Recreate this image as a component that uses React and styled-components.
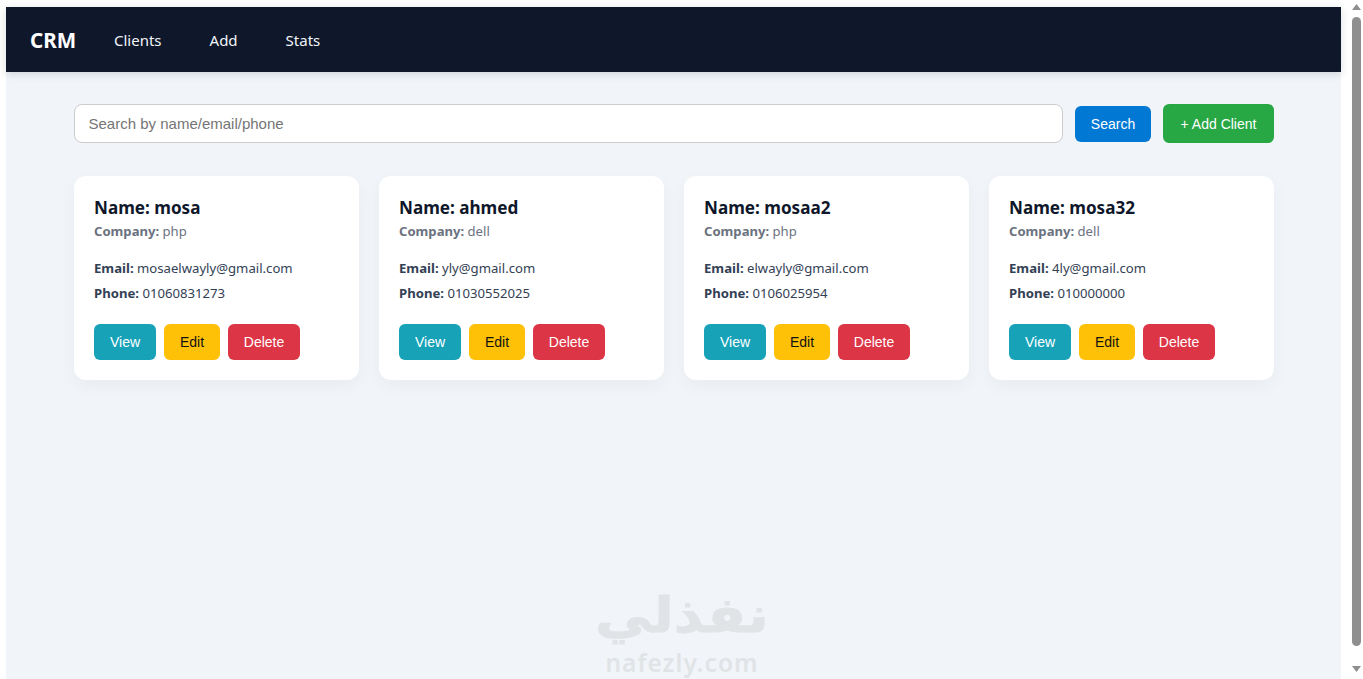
import React from "react";
import styled, { createGlobalStyle } from "styled-components";

const clients = [
  { name: "mosa", company: "php", email: "mosaelwayly@gmail.com", phone: "01060831273" },
  { name: "ahmed", company: "dell", email: "yly@gmail.com", phone: "01030552025" },
  { name: "mosaa2", company: "php", email: "elwayly@gmail.com", phone: "0106025954" },
  { name: "mosa32", company: "dell", email: "4ly@gmail.com", phone: "010000000" },
];

const GlobalStyle = createGlobalStyle`
  html, body {
    margin: 0;
    height: 100%;
    overflow: hidden;
    background: #fff;
  }
  * { box-sizing: border-box; }
`;

const Frame = styled.div`
  display: flex;
  height: 679px;
  padding: 7px 1px 0 6px;
  font-family: "Noto Sans", "Open Sans", sans-serif;
`;

const Page = styled.div`
  position: relative;
  width: 1335px;
  background: #f1f5f9;
`;

const Nav = styled.nav`
  display: flex;
  align-items: center;
  height: 65px;
  padding: 0 24px;
  background: #0f172a;
  box-shadow: 0 2px 8px rgba(15, 23, 42, 0.15);
`;

const Brand = styled.div`
  width: 84px;
  color: #fff;
  font-size: 20.6px;
  font-weight: 700;
`;

const NavLink = styled.a`
  margin-right: ${(p) => p.$gap}px;
  color: #f1f5f9;
  font-size: 15px;
`;

const Container = styled.main`
  width: 1200px;
  margin: 32px auto 0 68px;
`;

const SearchRow = styled.div`
  display: flex;
  align-items: center;
  gap: 12px;
`;

const SearchInput = styled.input`
  flex: 1;
  height: 39px;
  padding: 0 13.5px;
  border: 1px solid #cccccc;
  border-radius: 8px;
  background: #fff;
  font-family: "Liberation Sans", Arial, sans-serif;
  font-size: 15px;
  &::placeholder { color: #757575; }
`;

const Btn = styled.button`
  height: ${(p) => p.$h || 36}px;
  width: ${(p) => p.$w}px;
  padding: 0;
  border: 0;
  border-radius: 6px;
  background: ${(p) => p.$bg};
  color: ${(p) => p.$fg || "#fff"};
  font-family: "Liberation Sans", Arial, sans-serif;
  font-size: 14px;
`;

const Cards = styled.div`
  display: grid;
  grid-template-columns: repeat(4, 285px);
  gap: 20px;
  margin-top: 33px;
`;

const Card = styled.article`
  height: 204px;
  padding: 20px;
  border-radius: 12px;
  background: #fff;
  box-shadow: 0 6px 18px rgba(15, 23, 42, 0.04);
`;

const Name = styled.h3`
  margin: 0;
  height: 24px;
  line-height: 24px;
  color: #0f172a;
  font-size: 17.1px;
  font-weight: 700;
`;

const Company = styled.p`
  margin: 0 0 14px;
  height: 22px;
  line-height: 22px;
  color: #6b7280;
  font-size: 13.1px;
  b { font-weight: 700; }
`;

const Line = styled.p`
  margin: 0;
  height: 25px;
  line-height: 25px;
  color: #334155;
  font-size: 13.15px;
  b { font-weight: 700; }
`;

const Actions = styled.div`
  display: flex;
  gap: 8px;
  margin-top: 18px;
`;

const Watermark = styled.div`
  position: absolute;
  left: 591px;
  top: 576px;
  width: 170px;
  text-align: center;
  color: #e1e4e7;
  font-family: "DejaVu Sans", sans-serif;
  font-weight: 700;
`;

const WatermarkArabic = styled.div`
  height: 66px;
  line-height: 66px;
  font-size: 49px;
  white-space: nowrap;
  transform: scaleX(1.16);
  -webkit-text-stroke: 1px #e1e4e7;
`;

const WatermarkLatin = styled.div`
  height: 28px;
  line-height: 28px;
  font-size: 24.5px;
  font-weight: 600;
  letter-spacing: 1px;
  white-space: nowrap;
  font-family: "Noto Sans", sans-serif;
`;

const Scrollbar = styled.div`
  display: flex;
  flex-direction: column;
  align-items: center;
  width: 11px;
  height: 679px;
  margin: -7px 0 0 auto;
`;

const Arrow = styled.svg`
  flex: none;
  width: 9px;
  height: 6px;
  margin: ${(p) => p.$m};
`;

const Thumb = styled.div`
  width: 9px;
  height: 629px;
  border-radius: 5px;
  background: #8f8f8f;
`;

const ClientCard = ({ c }) => (
  <Card>
    <Name>Name: {c.name}</Name>
    <Company>
      <b>Company:</b> {c.company}
    </Company>
    <Line>
      <b>Email:</b> {c.email}
    </Line>
    <Line>
      <b>Phone:</b> {c.phone}
    </Line>
    <Actions>
      <Btn $w={62} $bg="#17a2b8">View</Btn>
      <Btn $w={56} $bg="#ffc107" $fg="#111">Edit</Btn>
      <Btn $w={72} $bg="#dc3545">Delete</Btn>
    </Actions>
  </Card>
);

export default function App() {
  return (
    <Frame>
      <GlobalStyle />
      <Page>
        <Nav>
          <Brand>CRM</Brand>
          <NavLink $gap={48}>Clients</NavLink>
          <NavLink $gap={48}>Add</NavLink>
          <NavLink $gap={0}>Stats</NavLink>
        </Nav>
        <Container>
          <SearchRow>
            <SearchInput placeholder="Search by name/email/phone" />
            <Btn $w={76} $bg="#0078d4">Search</Btn>
            <Btn $w={111} $h={39} $bg="#28a745">+ Add Client</Btn>
          </SearchRow>
          <Cards>
            {clients.map((c) => (
              <ClientCard key={c.name} c={c} />
            ))}
          </Cards>
        </Container>
        <Watermark>
          <WatermarkArabic dir="rtl">نفذلي</WatermarkArabic>
          <WatermarkLatin>nafezly.com</WatermarkLatin>
        </Watermark>
      </Page>
      <Scrollbar>
        <Arrow $m="4px 0 7px" viewBox="0 0 9 6">
          <path d="M4.5 0 9 6H0z" fill="#8f8f8f" />
        </Arrow>
        <Thumb />
        <Arrow $m="20px 0 0" viewBox="0 0 9 6">
          <path d="M0 0h9L4.5 6z" fill="#8f8f8f" />
        </Arrow>
      </Scrollbar>
    </Frame>
  );
}
